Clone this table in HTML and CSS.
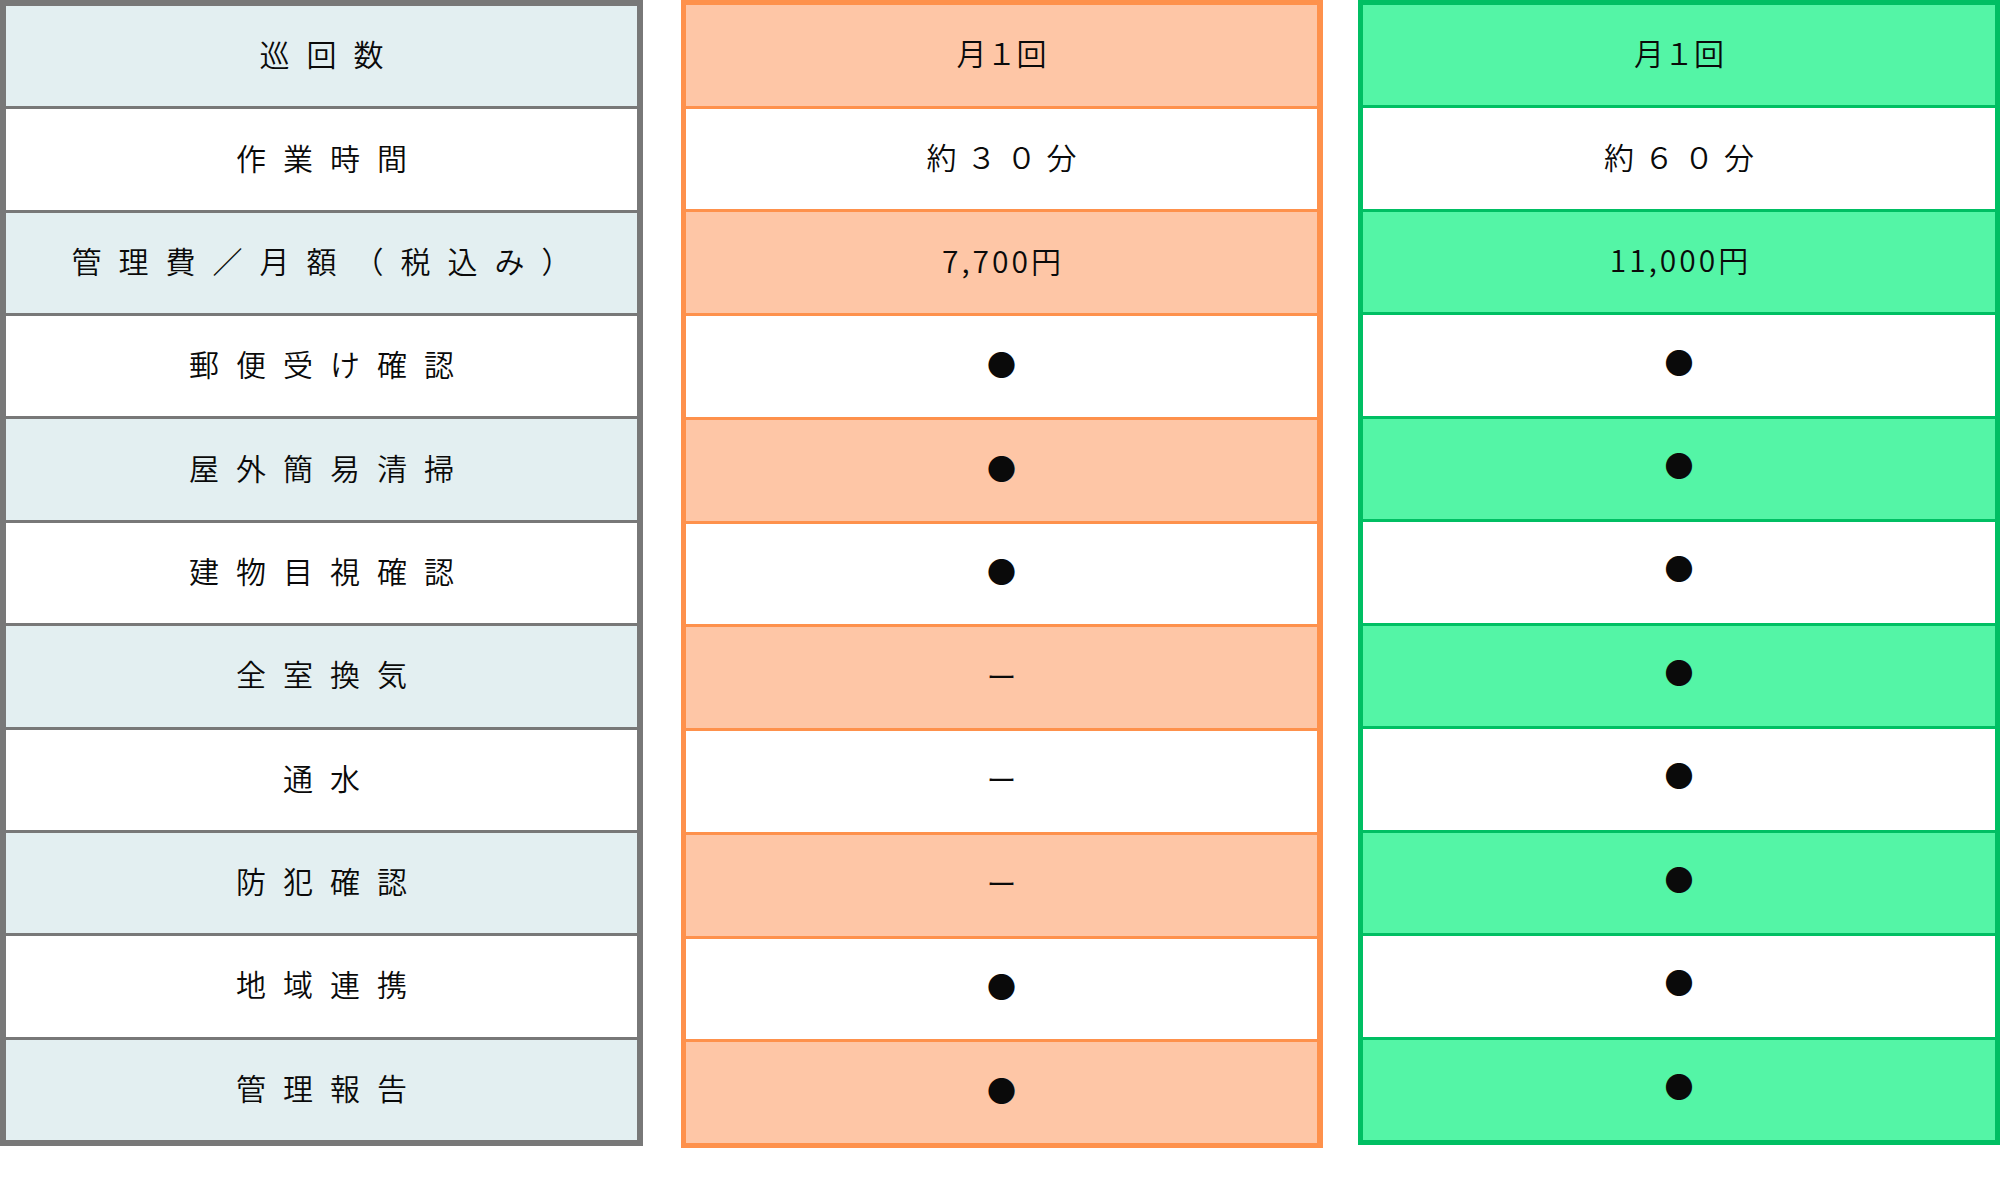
FILE: index.html
```html
<!DOCTYPE html>
<html lang="ja">
<head>
<meta charset="utf-8">
<title>巡回プラン比較</title>
<link rel="stylesheet" href="styles.css">
</head>
<body>
<div class="compare">
  <div class="col col-label">
    <div class="cell fill">巡回数</div>
    <div class="cell">作業時間</div>
    <div class="cell fill">管理費／月額（税込み）</div>
    <div class="cell">郵便受け確認</div>
    <div class="cell fill">屋外簡易清掃</div>
    <div class="cell">建物目視確認</div>
    <div class="cell fill">全室換気</div>
    <div class="cell">通水</div>
    <div class="cell fill">防犯確認</div>
    <div class="cell">地域連携</div>
    <div class="cell fill">管理報告</div>
  </div>
  <div class="col col-orange">
    <div class="cell fill">月１回</div>
    <div class="cell spaced">約３０分</div>
    <div class="cell fill price">7,700円</div>
    <div class="cell mark">●</div>
    <div class="cell fill mark">●</div>
    <div class="cell mark">●</div>
    <div class="cell fill dash">ー</div>
    <div class="cell dash">ー</div>
    <div class="cell fill dash">ー</div>
    <div class="cell mark">●</div>
    <div class="cell fill mark">●</div>
  </div>
  <div class="col col-green">
    <div class="cell fill">月１回</div>
    <div class="cell spaced">約６０分</div>
    <div class="cell fill price">11,000円</div>
    <div class="cell mark">●</div>
    <div class="cell fill mark">●</div>
    <div class="cell mark">●</div>
    <div class="cell fill mark">●</div>
    <div class="cell mark">●</div>
    <div class="cell fill mark">●</div>
    <div class="cell mark">●</div>
    <div class="cell fill mark">●</div>
  </div>
</div>
</body>
</html>
```
FILE: styles.css
```css
html, body {
  margin: 0;
  padding: 0;
  background: #ffffff;
}

body {
  font-family: "Noto Sans CJK JP", "Noto Sans", sans-serif;
  color: #0a0a0a;
}

.compare {
  display: flex;
  align-items: flex-start;
  width: 2000px;
}

.col {
  box-sizing: border-box;
  display: grid;
  grid-template-rows: repeat(11, 1fr);
  row-gap: 3px;
}

.col-label {
  width: 643px;
  height: 1146px;
  border: 6px solid #787878;
  background: #787878;
}

.col-orange {
  width: 642px;
  height: 1148px;
  margin-left: 38px;
  border: 5px solid #fe914c;
  border-right-width: 6px;
  background: #fe914c;
}

.col-green {
  width: 642px;
  height: 1145px;
  margin-left: 35px;
  border: 5px solid #00bf63;
  background: #00bf63;
}

.cell {
  display: flex;
  align-items: center;
  justify-content: center;
  padding-bottom: 6px;
  background: #ffffff;
  font-size: 30px;
  font-weight: 350;
  line-height: 1;
  white-space: nowrap;
}

.col-label .cell {
  letter-spacing: 17px;
  padding-left: 17px;
}

.col-label .fill {
  background: #e3eff1;
}

.col-orange .fill {
  background: #fec6a6;
}

.col-green .fill {
  background: #54f5a6;
}

.spaced {
  letter-spacing: 10px;
  padding-left: 10px;
}

.price {
  letter-spacing: 3px;
  padding-left: 3px;
}

.mark {
  font-size: 29px;
}

.col-green .mark {
  padding-bottom: 9px;
}

.dash {
  font-size: 30px;
}
```
